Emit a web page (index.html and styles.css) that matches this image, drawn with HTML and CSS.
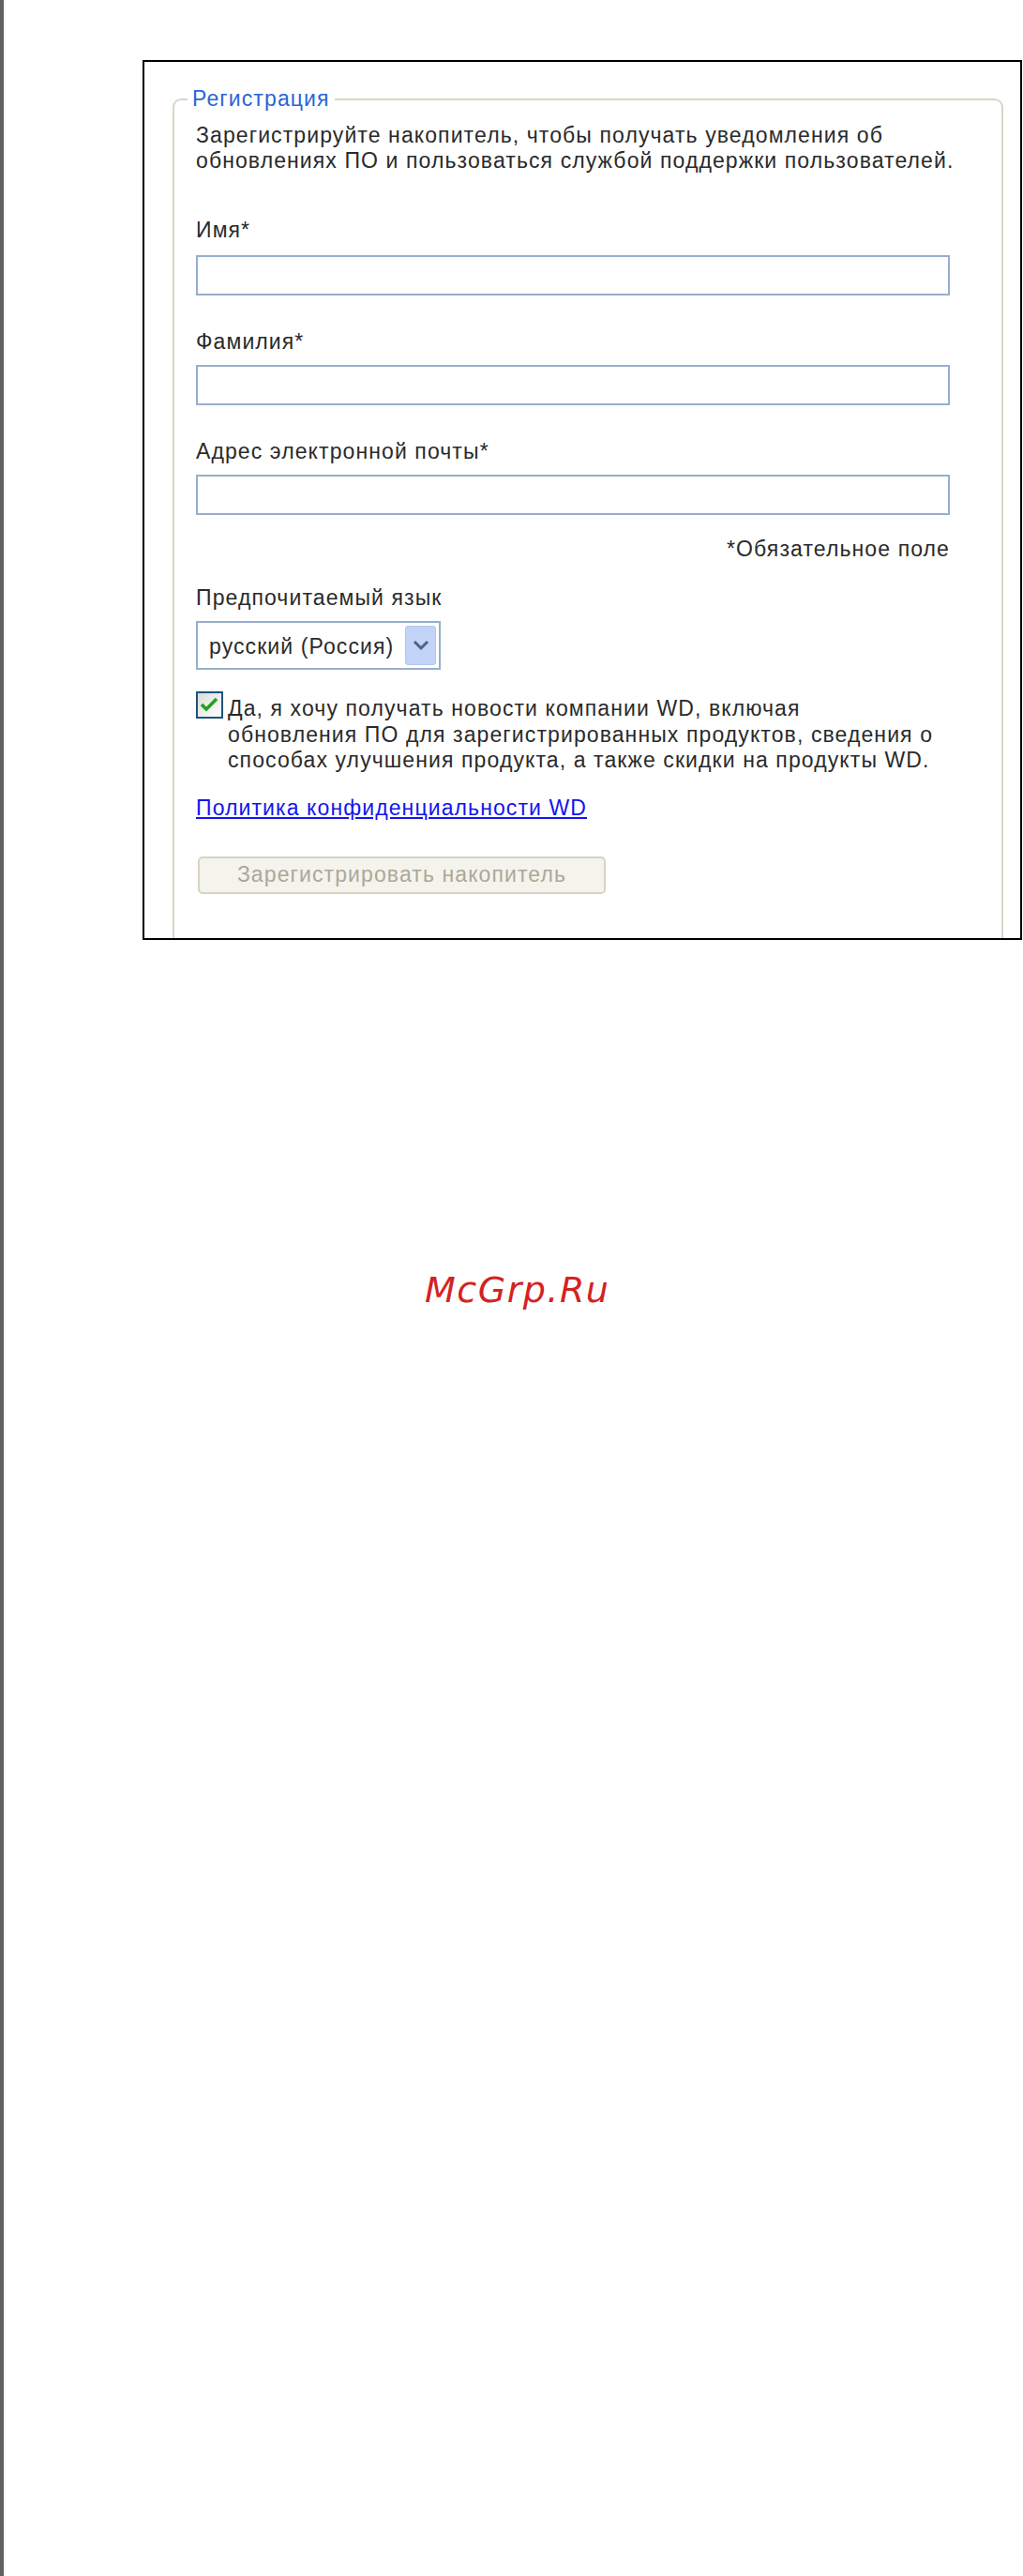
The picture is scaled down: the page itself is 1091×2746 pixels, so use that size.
FILE: index.html
```html
<!DOCTYPE html>
<html lang="ru">
<head>
    <meta charset="UTF-8">
    <meta name="viewport" content="width=device-width, initial-scale=1.0">
    <title>Регистрация</title>
    <link rel="stylesheet" href="styles.css">
</head>
<body>
<div class="page">
    <div class="frame">
        <fieldset class="reg">
            <legend>Регистрация</legend>
            <div class="reg-body">
                <p class="intro">Зарегистрируйте накопитель, чтобы получать уведомления об<br>обновлениях ПО и пользоваться службой поддержки пользователей.</p>

                <label class="field-label first">Имя*</label>
                <input class="field" type="text">

                <label class="field-label">Фамилия*</label>
                <input class="field" type="text">

                <label class="field-label">Адрес электронной почты*</label>
                <input class="field last" type="text">

                <div class="required">*Обязательное поле</div>

                <div class="field-label">Предпочитаемый язык</div>
                <div class="select">
                    <span class="select-text">русский (Россия)</span>
                    <span class="select-btn">
                        <svg width="20" height="12" viewBox="0 0 20 12"><path d="M3 2 L10 9 L17 2" fill="none" stroke="#4d6287" stroke-width="3"/></svg>
                    </span>
                </div>

                <div class="news">
                    <span class="check">
                        <svg width="25" height="25" viewBox="0 0 25 25"><path d="M4 12 L9 17 L20 6" fill="none" stroke="#1fa31f" stroke-width="3.5"/></svg>
                    </span>
                    <p>Да, я хочу получать новости компании WD, включая<br>обновления ПО для зарегистрированных продуктов, сведения о<br>способах улучшения продукта, а также скидки на продукты WD.</p>
                </div>

                <a class="privacy" href="#">Политика конфиденциальности WD</a>

                <button class="register" disabled>Зарегистрировать накопитель</button>
            </div>
        </fieldset>
    </div>

    <div class="watermark">McGrp.Ru</div>
</div>
</body>
</html>
```

FILE: styles.css
```css
* {
margin: 0;
padding: 0;
box-sizing: border-box;
}

body {
background-color: #ffffff;
font-family: "Liberation Sans", Arial, sans-serif;
color: #2a2a2a;
}

.page {
min-height: 2746px;
border-left: 4px solid #616161;
overflow: hidden;
}

.frame {
margin-left: 148px;
margin-top: 64px;
width: 938px;
height: 938px;
border: 2px solid #000000;
overflow: hidden;
}

.reg {
margin: 26px 18px 0 30px;
height: 1100px;
min-width: 0;
border: 2px solid #d6d6c6;
border-radius: 9px;
padding: 12px 0 0 14px;
font-size: 23px;
line-height: 27px;
letter-spacing: 1.1px;
}

.reg legend {
padding: 0 5px;
color: #2a64d8;
font-size: 23px;
line-height: 27px;
}

.reg-body {
padding-left: 9px;
}

.intro {
line-height: 26.5px;
white-space: nowrap;
margin-bottom: 48px;
}

.field-label {
display: block;
margin-bottom: 11px;
}

.field-label.first {
margin-bottom: 13px;
}

.field {
display: block;
width: 804px;
height: 43px;
border: 2px solid #97afcc;
background-color: #ffffff;
margin-bottom: 36px;
outline: none;
}

.field.last {
margin-bottom: 23px;
}

.required {
width: 804px;
text-align: right;
margin-bottom: 25px;
}

.select {
display: flex;
align-items: center;
justify-content: space-between;
width: 261px;
height: 52px;
border: 2px solid #97afcc;
padding: 2px 3px 0 12px;
margin-bottom: 23px;
white-space: nowrap;
}

.select-btn {
display: flex;
align-items: center;
justify-content: center;
flex: none;
width: 33px;
height: 42px;
margin-top: -2px;
background-color: #c2d3f8;
border: 1px solid #b3c6ee;
border-radius: 3px;
}

.news {
display: flex;
gap: 5px;
margin-bottom: 23px;
}

.check {
display: flex;
align-items: center;
justify-content: center;
flex: none;
width: 29px;
height: 29px;
border: 2px solid #1d5281;
background: linear-gradient(135deg, #dcdcd5, #ffffff);
}

.news p {
padding-top: 5px;
line-height: 27.5px;
white-space: nowrap;
}

.privacy {
display: inline-block;
color: #1414ee;
text-decoration: underline;
}

.register {
display: block;
width: 435px;
height: 40px;
margin-top: 38px;
margin-left: 2px;
border: 2px solid #d5d4c4;
border-radius: 5px;
background-color: #f4f3ec;
color: #aca899;
font-family: "Liberation Sans", Arial, sans-serif;
font-size: 23px;
letter-spacing: 1.1px;
}

.watermark {
margin-top: 350px;
margin-left: 449px;
font-family: "DejaVu Sans", sans-serif;
font-style: italic;
font-size: 38px;
line-height: 46px;
letter-spacing: 1.5px;
color: #d42222;
}
```
